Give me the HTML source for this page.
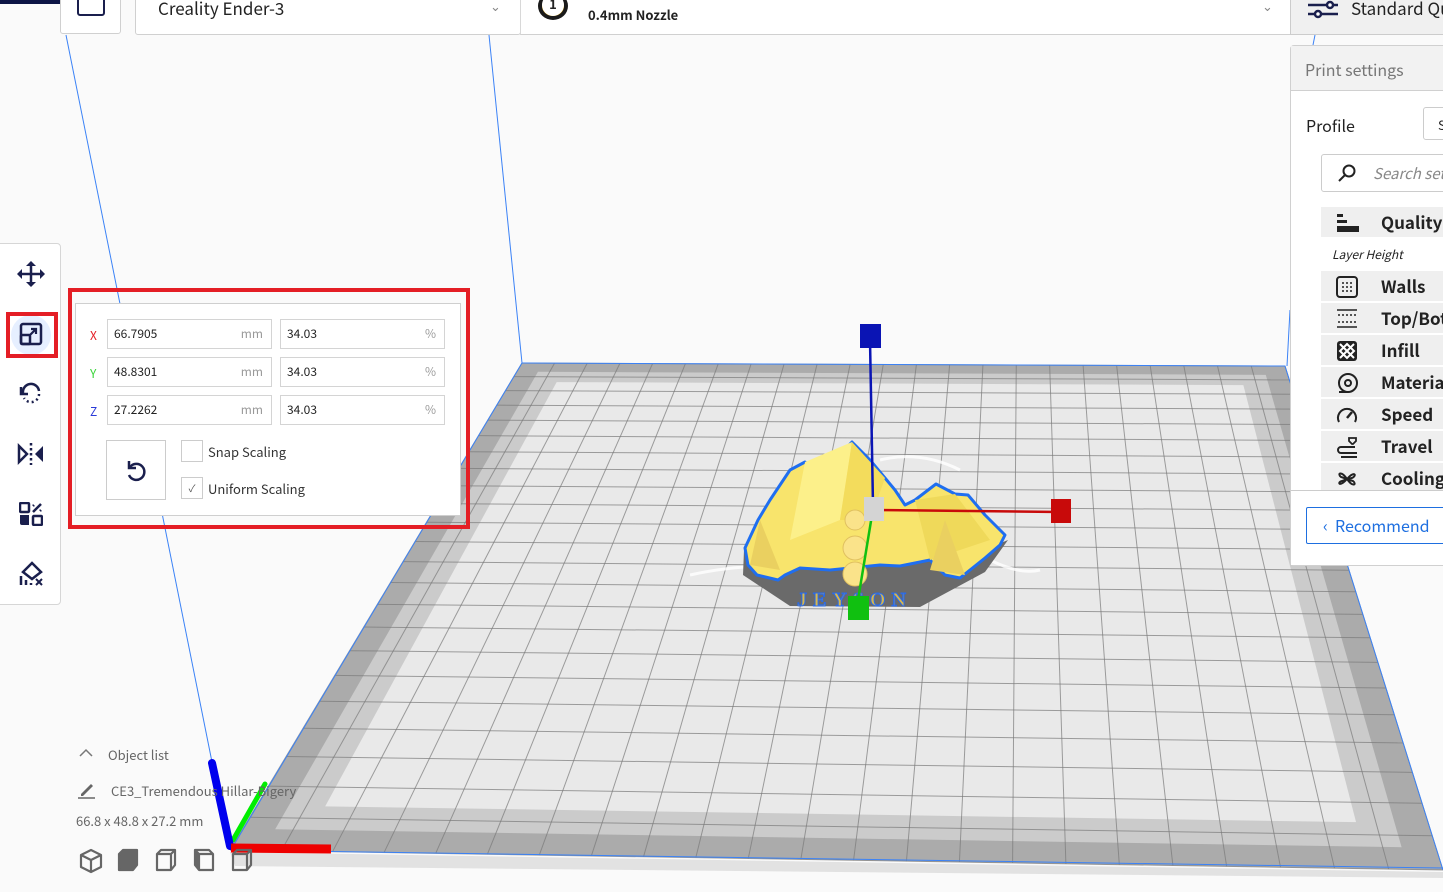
<!DOCTYPE html>
<html><head><meta charset="utf-8">
<style>
*{box-sizing:border-box;margin:0;padding:0}
body{width:1443px;height:892px;overflow:hidden;background:#fafafa;font-family:"Noto Sans CJK SC","Liberation Sans",sans-serif;position:relative;color:#222}
.abs{position:absolute}
svg{position:absolute;left:0;top:0}
.tb{position:absolute;background:#fff;border:1px solid #d0d0d0}
.inp{position:absolute;height:30px;border:1px solid #d4d4d4;background:#fff;font-size:12px;line-height:28px;padding-left:6px;color:#222}
.inp span{position:absolute;right:8px;top:0;color:#999}
.lab{position:absolute;font-size:12px}
.row{position:absolute;left:1321px;width:130px;height:30px;background:#efefef;font-size:17px;font-weight:bold;line-height:30px;padding-left:60px;color:#222}
.row svg{left:14px;top:5px}
</style></head><body>
<svg id="scene" width="1443" height="892"></svg>

<!-- top bar -->
<div class="abs" style="left:0;top:0;width:60px;height:4px;background:#0c1445"></div>
<div class="tb" style="left:60px;top:-4px;width:61px;height:38px;border-radius:0 0 3px 3px"></div>
<div class="abs" style="left:77px;top:-6px;width:28px;height:22px;border:2.5px solid #1a1f4d;border-radius:3px"></div>
<div class="tb" style="left:135px;top:-4px;width:386px;height:39px;border-radius:0 0 3px 3px"></div>
<div class="abs" style="left:158px;top:-5px;font-size:17px;color:#222">Creality Ender-3</div>
<div class="abs" style="left:490px;top:-4px;font-size:13px;color:#888">&#8964;</div>
<div class="tb" style="left:520px;top:-4px;width:771px;height:39px;border-left:1px solid #d8d8d8"></div>
<div class="abs" style="left:538px;top:-8px;width:30px;height:28px;border-radius:50%;border:4px solid #1a1a1a;background:#f4b400"></div>
<div class="abs" style="left:542px;top:-6px;width:22px;height:22px;border-radius:50%;background:#fff;font-size:13px;font-weight:bold;text-align:center;line-height:20px">1</div>
<div class="abs" style="left:588px;top:5px;font-size:13px;font-weight:bold;color:#222">0.4mm Nozzle</div>
<div class="abs" style="left:1262px;top:-4px;font-size:13px;color:#888">&#8964;</div>
<div class="abs" style="left:1290px;top:0;width:153px;height:35px;background:#f0f0f0;border-left:1px solid #ccc;border-bottom:1px solid #ccc"></div>
<svg style="left:1308px;top:0" width="32" height="20" viewBox="0 0 32 20"><g stroke="#1a1f4d" stroke-width="2.5" fill="#fff"><line x1="0" y1="5" x2="30" y2="5"/><line x1="0" y1="14" x2="30" y2="14"/><circle cx="22" cy="5" r="3"/><circle cx="10" cy="14" r="3"/></g></svg>
<div class="abs" style="left:1351px;top:-5px;font-size:17px;color:#222;white-space:nowrap">Standard Qu</div>

<!-- print settings panel -->
<div class="abs" style="left:1290px;top:45px;width:160px;height:521px;background:#fff;border:1px solid #d0d0d0;border-radius:4px 0 0 4px"></div>
<div class="abs" style="left:1291px;top:46px;width:152px;height:45px;background:#f2f2f2;border-bottom:1px solid #d0d0d0"></div>
<div class="abs" style="left:1305px;top:57px;font-size:16px;color:#777">Print settings</div>
<div class="abs" style="left:1306px;top:113px;font-size:16px;color:#222">Profile</div>
<div class="abs" style="left:1423px;top:107px;width:30px;height:33px;border:1px solid #ccc;border-radius:3px;font-size:13px;padding:7px 0 0 14px">S</div>
<div class="abs" style="left:1321px;top:154px;width:130px;height:38px;border:1px solid #ccc;border-radius:3px"></div>
<svg style="left:1337px;top:163px" width="22" height="20" viewBox="0 0 22 20"><circle cx="12" cy="8" r="5.5" fill="none" stroke="#222" stroke-width="2"/><line x1="8" y1="12" x2="2" y2="18" stroke="#222" stroke-width="2"/></svg>
<div class="abs" style="left:1373px;top:163px;font-size:15px;color:#888;font-style:italic;white-space:nowrap">Search set</div>
<div class="row" style="top:207px">Quality<svg width="24" height="22" viewBox="0 0 24 22"><rect x="2" y="2" width="6" height="3" fill="#222"/><rect x="2" y="8" width="10" height="3" fill="#222"/><rect x="2" y="14" width="22" height="6" fill="#222"/></svg></div>
<div class="abs" style="left:1332px;top:246px;font-size:12px;font-style:italic;color:#222">Layer Height</div>
<div class="row" style="top:271px">Walls<svg width="24" height="22" viewBox="0 0 24 22"><rect x="2" y="1" width="20" height="20" rx="3" fill="none" stroke="#222" stroke-width="2"/><g fill="#222"><circle cx="8" cy="7" r="1"/><circle cx="12" cy="7" r="1"/><circle cx="16" cy="7" r="1"/><circle cx="8" cy="11" r="1"/><circle cx="12" cy="11" r="1"/><circle cx="16" cy="11" r="1"/><circle cx="8" cy="15" r="1"/><circle cx="12" cy="15" r="1"/><circle cx="16" cy="15" r="1"/></g></svg></div>
<div class="row" style="top:303px">Top/Bot<svg width="24" height="22" viewBox="0 0 24 22"><g stroke="#222" stroke-width="1.5"><line x1="2" y1="2" x2="22" y2="2"/><line x1="2" y1="19" x2="22" y2="19"/><line x1="3" y1="7" x2="21" y2="7" stroke-dasharray="2 2"/><line x1="3" y1="14" x2="21" y2="14" stroke-dasharray="2 2"/></g></svg></div>
<div class="row" style="top:335px">Infill<svg width="24" height="22" viewBox="0 0 24 22"><rect x="2" y="1" width="20" height="20" rx="3" fill="#222"/><path d="M5 4L19 18M19 4L5 18M12 4L19 11L12 18L5 11Z" stroke="#fff" stroke-width="2" fill="none"/></svg></div>
<div class="row" style="top:367px">Materia<svg width="24" height="22" viewBox="0 0 24 22"><circle cx="13" cy="11" r="9" fill="none" stroke="#222" stroke-width="2"/><circle cx="13" cy="11" r="3" fill="none" stroke="#222" stroke-width="2"/><line x1="4" y1="20" x2="13" y2="20" stroke="#222" stroke-width="2"/></svg></div>
<div class="row" style="top:399px">Speed<svg width="24" height="22" viewBox="0 0 24 22"><path d="M4 18A9 9 0 1 1 20 18" fill="none" stroke="#222" stroke-width="2"/><line x1="12" y1="14" x2="17" y2="8" stroke="#222" stroke-width="2.5"/></svg></div>
<div class="row" style="top:431px">Travel<svg width="24" height="22" viewBox="0 0 24 22"><path d="M14 2h7v3l-3 3h-1l-3-3z" fill="none" stroke="#222" stroke-width="1.8"/><path d="M20 11H6a3 3 0 0 0 0 6h16M6 21h16" fill="none" stroke="#222" stroke-width="2"/></svg></div>
<div class="row" style="top:463px">Cooling<svg width="24" height="22" viewBox="0 0 24 22"><path d="M12 11C6 2 2 6 6 9zM12 11C20 2 22 8 17 10zM12 11C18 20 22 16 18 13zM12 11C4 20 2 14 7 13z" fill="none" stroke="#222" stroke-width="2"/></svg></div>
<div class="abs" style="left:1291px;top:490px;width:152px;height:75px;background:#fff;border-top:1px solid #ccc"></div>
<div class="abs" style="left:1306px;top:507px;width:140px;height:37px;border:1px solid #1e6fe0;border-radius:2px;color:#1e6fe0;font-size:16px;line-height:35px;padding-left:16px;white-space:nowrap">&lsaquo;&nbsp;&nbsp;Recommend</div>

<!-- left toolbar -->
<div class="abs" style="left:-4px;top:243px;width:65px;height:362px;background:#fff;border:1px solid #d6d6d6;border-radius:4px"></div>
<svg style="left:17px;top:261px" width="28" height="26" viewBox="0 0 28 26"><g stroke="#1a1f4d" stroke-width="2.5" fill="#1a1f4d"><line x1="14" y1="3" x2="14" y2="23"/><line x1="3" y1="13" x2="25" y2="13"/></g><g fill="#1a1f4d"><path d="M14 0l5 5h-10z"/><path d="M14 26l5-5h-10z"/><path d="M0 13l5-5v10z"/><path d="M28 13l-5-5v10z"/></g></svg>
<div class="abs" style="left:11px;top:315px;width:40px;height:40px;border-radius:50%;background:#e6efff"></div>
<div class="abs" style="left:6px;top:312px;width:52px;height:46px;border:4px solid #e41e25"></div>
<svg style="left:19px;top:322px" width="24" height="24" viewBox="0 0 24 24"><rect x="2" y="2" width="20" height="20" rx="2" fill="none" stroke="#1a1f4d" stroke-width="2.5"/><rect x="2" y="13" width="9" height="9" rx="1" fill="none" stroke="#1a1f4d" stroke-width="2.5"/><path d="M11 13L17 7M12 7h5v5" fill="none" stroke="#1a1f4d" stroke-width="2.2"/></svg>
<svg style="left:18px;top:381px" width="26" height="26" viewBox="0 0 26 26"><path d="M5 12A8 8 0 0 1 21 10" fill="none" stroke="#1a1f4d" stroke-width="2.5"/><path d="M3 6v7h7" fill="none" stroke="#1a1f4d" stroke-width="2.5"/><path d="M21 13A8 8 0 0 1 6 17" fill="none" stroke="#1a1f4d" stroke-width="2.5" stroke-dasharray="2 3"/></svg>
<svg style="left:17px;top:442px" width="28" height="24" viewBox="0 0 28 24"><path d="M2 4L10 12L2 20Z" fill="none" stroke="#1a1f4d" stroke-width="2.5"/><path d="M26 4L18 12L26 20Z" fill="#1a1f4d"/><line x1="14" y1="1" x2="14" y2="23" stroke="#1a1f4d" stroke-width="2.5" stroke-dasharray="2.5 2.5"/></svg>
<svg style="left:19px;top:502px" width="24" height="24" viewBox="0 0 24 24"><rect x="1" y="1" width="9" height="9" rx="1" fill="none" stroke="#1a1f4d" stroke-width="2.5"/><path d="M14 10L22 2M15 3l-1 1M21 9l1-1" stroke="#1a1f4d" stroke-width="2.5"/><path d="M1 13h9v10H3a2 2 0 0 1-2-2z" fill="#1a1f4d"/><rect x="14" y="14" width="9" height="9" rx="1" fill="none" stroke="#1a1f4d" stroke-width="2.5"/></svg>
<svg style="left:19px;top:561px" width="26" height="26" viewBox="0 0 26 26"><path d="M13 2L22 11L13 18L4 11Z" fill="none" stroke="#1a1f4d" stroke-width="2.5"/><g stroke="#1a1f4d" stroke-width="2.5"><line x1="2" y1="15" x2="2" y2="24"/><line x1="7" y1="19" x2="7" y2="24"/><line x1="12" y1="22" x2="12" y2="24"/><path d="M17 18l6 6M23 18l-6 6" stroke-width="2"/></g></svg>

<!-- scale panel -->
<div class="abs" style="left:68px;top:288px;width:402px;height:241px;border:4px solid #e41e25"></div>
<div class="abs" style="left:75px;top:303px;width:386px;height:213px;background:#fff;border:1px solid #cfcfcf"></div>
<div class="lab" style="left:90px;top:327px;color:#e41e25">X</div>
<div class="lab" style="left:90px;top:365px;color:#3ad43a">Y</div>
<div class="lab" style="left:90px;top:403px;color:#2a3ad8">Z</div>
<div class="inp" style="left:107px;top:319px;width:165px">66.7905<span>mm</span></div>
<div class="inp" style="left:280px;top:319px;width:165px">34.03<span>%</span></div>
<div class="inp" style="left:107px;top:357px;width:165px">48.8301<span>mm</span></div>
<div class="inp" style="left:280px;top:357px;width:165px">34.03<span>%</span></div>
<div class="inp" style="left:107px;top:395px;width:165px">27.2262<span>mm</span></div>
<div class="inp" style="left:280px;top:395px;width:165px">34.03<span>%</span></div>
<div class="abs" style="left:106px;top:440px;width:60px;height:60px;border:1px solid #ccc;background:#fff"></div>
<svg style="left:124px;top:458px" width="24" height="26" viewBox="0 0 24 26"><path d="M6 9A8 8 0 1 1 5 17" fill="none" stroke="#1a1f4d" stroke-width="2.5"/><path d="M5 3v7h7" fill="none" stroke="#1a1f4d" stroke-width="2.5"/></svg>
<div class="abs" style="left:181px;top:440px;width:22px;height:22px;border:1px solid #ccc"></div>
<div class="abs" style="left:208px;top:442px;font-size:13px;color:#333">Snap Scaling</div>
<div class="abs" style="left:181px;top:477px;width:22px;height:22px;border:1px solid #ccc;font-size:10px;text-align:center;line-height:20px;color:#555">&#10003;</div>
<div class="abs" style="left:208px;top:479px;font-size:13px;color:#333">Uniform Scaling</div>

<!-- object list -->
<svg style="left:79px;top:748px" width="14" height="10" viewBox="0 0 14 10"><path d="M1 8L7 2L13 8" fill="none" stroke="#777" stroke-width="1.5"/></svg>
<div class="abs" style="left:108px;top:745px;font-size:13px;color:#666">Object list</div>
<svg style="left:78px;top:781px" width="18" height="18" viewBox="0 0 18 18"><path d="M3 13L13 3L15 5L5 15H3Z" fill="#666"/><line x1="0" y1="17" x2="17" y2="17" stroke="#666" stroke-width="1.5"/></svg>
<div class="abs" style="left:111px;top:781px;font-size:13px;color:#666;white-space:nowrap">CE3_Tremendous Hillar-Bigery</div>
<div class="abs" style="left:76px;top:811px;font-size:13px;color:#666">66.8 x 48.8 x 27.2 mm</div>
<svg style="left:78px;top:848px" width="180" height="26" viewBox="0 0 180 26"><g stroke="#666" stroke-width="2.2" fill="none" stroke-linejoin="round"><path d="M13 2L23 7V19L13 24L3 19V7Z M3 7L13 12L23 7 M13 12V24"/><path d="M41 6L45 2H59V17L55 22H41Z" fill="#666"/><path d="M41 6H55V22M55 6L59 2"/><path d="M79 6L83 2H97V17L93 22H79Z M79 6H93V22 M93 6L97 2"/><path d="M117 2H131L135 6V22H121L117 17Z" /><path d="M121 6H135M121 6V22M121 6L117 2" /><path d="M155 6L159 2H173V17L169 22H155Z M155 6H169V22 M169 6L173 2"/></g><path d="M117 2V17L121 22V6Z" fill="#666"/></svg>

<script>
(function(){
var NS="http://www.w3.org/2000/svg",S=document.getElementById('scene');
function el(t,a){var e=document.createElementNS(NS,t);for(var k in a)e.setAttribute(k,a[k]);S.appendChild(e);return e;}
var P=[[522,363],[1285,366],[1443,870],[230,850]];
var x0=P[0][0],y0=P[0][1],x1=P[1][0],y1=P[1][1],x2=P[2][0],y2=P[2][1],x3=P[3][0],y3=P[3][1];
var dx1=x1-x2,dx2=x3-x2,dx3=x0-x1+x2-x3,dy1=y1-y2,dy2=y3-y2,dy3=y0-y1+y2-y3;
var den=dx1*dy2-dx2*dy1,g=(dx3*dy2-dx2*dy3)/den,h=(dx1*dy3-dx3*dy1)/den;
var a=x1-x0+g*x1,b=x3-x0+h*x3,d=y1-y0+g*y1,e=y3-y0+h*y3;
function M(u,v){var w=g*u+h*v+1;return [(a*u+b*v+x0)/w,(d*u+e*v+y0)/w];}
function quad(i,col){var p=[M(i,i),M(1-i,i),M(1-i,1-i),M(i,1-i)];el('polygon',{points:p.map(function(q){return q.join(',')}).join(' '),fill:col});}
el('polygon',{points:'230,852 1443,872 1443,878 235,866',fill:'#e2e2e2'});
quad(0,'#ababab');quad(0.028,'#cbcbcb');quad(0.06,'#e9e9e9');
var N=23;
for(var i=0;i<=N;i++){var t=i/N;
 var A=M(t,0),B=M(t,1);el('line',{x1:A[0],y1:A[1],x2:B[0],y2:B[1],stroke:'#7a7a7a','stroke-width':1,opacity:.7});
 A=M(0,t);B=M(1,t);el('line',{x1:A[0],y1:A[1],x2:B[0],y2:B[1],stroke:'#7a7a7a','stroke-width':1,opacity:.7});}
el('polyline',{points:'522,363 1285,366 1443,870',fill:'none',stroke:'#3b82f6','stroke-width':1});
el('line',{x1:230,y1:850,x2:1443,y2:868,stroke:'#3b82f6','stroke-width':1});
el('line',{x1:522,y1:363,x2:232,y2:848,stroke:'#3b82f6','stroke-width':1});
el('line',{x1:66,y1:35,x2:212,y2:762,stroke:'#3b82f6','stroke-width':1});
el('line',{x1:489,y1:35,x2:522,y2:363,stroke:'#3b82f6','stroke-width':1});
el('line',{x1:1315,y1:35,x2:1313,y2:45,stroke:'#3b82f6','stroke-width':1});
el('line',{x1:1290,y1:310,x2:1287,y2:366,stroke:'#3b82f6','stroke-width':1});
el('path',{d:'M690 575 Q760 560 800 572 M990 560 Q1020 575 1040 570 M880 460 Q920 450 960 470',stroke:'#fff','stroke-width':3,fill:'none',opacity:.8});
el('polygon',{points:'744,550 743,575 790,606 920,607 985,572 1008,540 960,560 760,560',fill:'#6a6a6a'});
el('polygon',{points:'745,548 758,520 770,500 790,470 805,462 820,475 852,442 870,460 885,478 895,490 905,505 915,500 936,484 955,494 968,495 985,515 1005,535 1000,545 985,558 960,578 945,575 930,560 900,566 880,565 830,570 800,568 785,575 778,580 757,575 748,565',fill:'#f8e46c',stroke:'#1f6ef0','stroke-width':3,'stroke-linejoin':'round'});
el('polygon',{points:'805,462 852,442 840,520 790,540',fill:'#fcf08a'});
el('polygon',{points:'852,442 885,478 870,520 840,520',fill:'#f3dc5c'});
el('polygon',{points:'915,500 955,494 990,540 930,560',fill:'#efd95a'});
el('polygon',{points:'760,520 780,570 750,565',fill:'#ead060'});
el('polygon',{points:'945,520 965,575 930,570',fill:'#ead060'});
[[855,520,10],[855,548,12],[855,574,12]].forEach(function(c){el('circle',{cx:c[0],cy:c[1],r:c[2],fill:'#fae38a',stroke:'#e0c060','stroke-width':1});});
var tx=el('text',{x:797,y:606,'font-family':'Liberation Serif, serif','font-size':20,'font-weight':'bold',fill:'#d9b84a',stroke:'#2a6ae8','stroke-width':1,'letter-spacing':'6'});tx.textContent='JEYSON';
el('line',{x1:870,y1:340,x2:873,y2:505,stroke:'#0a14b4','stroke-width':2.5});
el('rect',{x:860,y:324,width:21,height:24,fill:'#0a14b4'});
el('line',{x1:874,y1:510,x2:1060,y2:512,stroke:'#c80a0a','stroke-width':2.5});
el('rect',{x:1051,y:499,width:20,height:24,fill:'#c80a0a'});
el('line',{x1:872,y1:515,x2:858,y2:600,stroke:'#10c010','stroke-width':2.5});
el('rect',{x:848,y:596,width:21,height:24,fill:'#10c010'});
el('rect',{x:864,y:497,width:20,height:24,fill:'#d4d4d4'});
el('line',{x1:265,y1:784,x2:233,y2:840,stroke:'#00ee00','stroke-width':5,'stroke-linecap':'round'});
el('line',{x1:212,y1:763,x2:230,y2:846,stroke:'#0000ee','stroke-width':8,'stroke-linecap':'round'});
el('line',{x1:231,y1:848,x2:331,y2:849,stroke:'#ee0000','stroke-width':9});
})();
</script>
</body></html>
